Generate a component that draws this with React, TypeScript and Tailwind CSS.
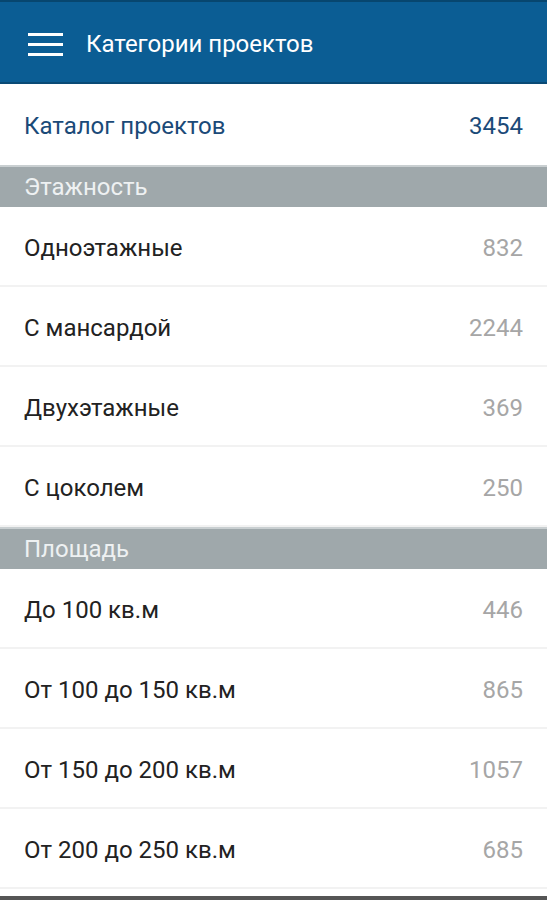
import React from "react"

const sections = [
  {
    title: "Этажность",
    items: [
      { name: "Одноэтажные", count: 832 },
      { name: "С мансардой", count: 2244 },
      { name: "Двухэтажные", count: 369 },
      { name: "С цоколем", count: 250 },
    ],
  },
  {
    title: "Площадь",
    items: [
      { name: "До 100 кв.м", count: 446 },
      { name: "От 100 до 150 кв.м", count: 865 },
      { name: "От 150 до 200 кв.м", count: 1057 },
      { name: "От 200 до 250 кв.м", count: 685 },
    ],
  },
]

const Row = ({ name, count }: { name: string; count: number }) => (
  <div className="flex items-center justify-between h-[80px] px-6 pt-[3px] border-b-2 border-[#f2f2f2] bg-white">
    <span className="text-[24px] text-[#222222]">{name}</span>
    <span className="text-[24px] text-[#a6a6a6]">{count}</span>
  </div>
)

export default function App() {
  return (
    <div
      className="w-[547px] h-[900px] overflow-hidden bg-white flex flex-col"
      style={{ fontFamily: "Roboto, 'Noto Sans', sans-serif" }}
    >
      <header className="h-[84px] shrink-0 bg-[#0b5d94] border-t-2 border-[#07466f] border-b-2 border-b-[#0a4a75] pt-[4px] flex items-center">
        <div className="ml-[28px] w-[35px] flex flex-col gap-[7px]">
          <span className="block h-[3px] bg-white" />
          <span className="block h-[3px] bg-white" />
          <span className="block h-[3px] bg-white" />
        </div>
        <h1 className="ml-[23px] text-[24px] text-white">Категории проектов</h1>
      </header>
      <div className="flex items-center justify-between h-[81px] px-6 pt-[2px] shrink-0">
        <span className="text-[24px] text-[#1b4a78]">Каталог проектов</span>
        <span className="text-[24px] text-[#1b4a78]">3454</span>
      </div>
      {sections.map((section) => (
        <div key={section.title} className="shrink-0">
          <div className="h-[42px] bg-[#9fa8ab] border-t-2 border-[#c9cfd1] flex items-center px-6">
            <span className="text-[24px] text-[#eef1f2]">{section.title}</span>
          </div>
          {section.items.map((item) => (
            <Row key={item.name} name={item.name} count={item.count} />
          ))}
        </div>
      ))}
      <div className="flex-1 border-b-4 border-[#555]" />
    </div>
  )
}
